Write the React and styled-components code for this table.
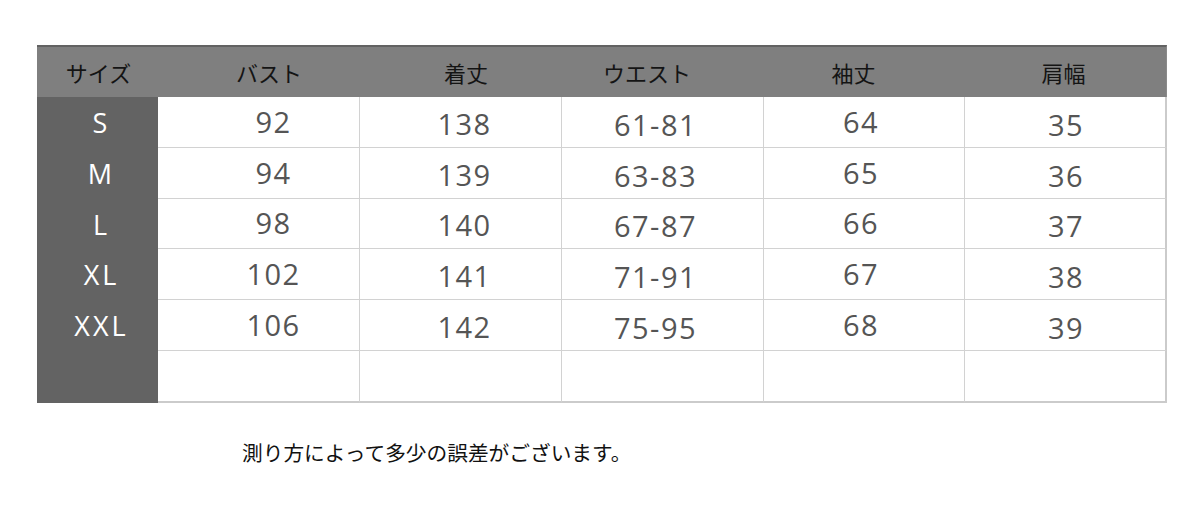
import styled, {createGlobalStyle} from "styled-components";

const GlobalStyle = createGlobalStyle`
  html, body {
    margin: 0;
    padding: 0;
    background: #ffffff;
  }
  body {
    font-family: "Open Sans", "Noto Sans CJK JP", sans-serif;
  }
`

const Page = styled.div`
  width: 1200px;
  height: 516px;
  padding: 45px 0 0 37px;
  box-sizing: border-box;
  overflow: hidden;
`

const Table = styled.div`
  display: grid;
  grid-template-columns: 121px 202px 202px 202px 201px 202px;
  grid-template-rows: 52px 51px 51px 50px 51px 51px 52px;
  width: 1130px;
`

const Cell = styled.div`
  box-sizing: border-box;
  display: flex;
  align-items: center;
  justify-content: center;
  padding-left: ${(p) => Math.max(0, p.$dx * 2)}px;
  padding-right: ${(p) => Math.max(0, -p.$dx * 2)}px;
  padding-top: ${(p) => Math.max(0, p.$dy * 2)}px;
  padding-bottom: ${(p) => Math.max(0, -p.$dy * 2)}px;
`

const HeadCell = styled(Cell)`
  background: #7f7f7f;
  border-top: 2px solid #626262;
  font-family: "Noto Sans CJK JP", sans-serif;
  font-size: 22px;
  color: #141414;
  ${(p) => p.$last && "border-right: 1px solid #8a8a8a;"}
`

const SizeCell = styled(Cell)`
  background: #636363;
  color: #ffffff;
  font-family: "Open Sans", sans-serif;
  font-size: 27px;
  font-weight: 500;
  letter-spacing: 3px;
`

const DataCell = styled(Cell)`
  background: #ffffff;
  border-right: ${(p) => (p.$last ? "2px solid #cbcbcb" : "1px solid #d2d2d2")};
  border-bottom: ${(p) => (p.$bottom ? "2px solid #cbcbcb" : "1px solid #d2d2d2")};
  color: #555555;
  font-family: "Open Sans", sans-serif;
  font-size: 29px;
  letter-spacing: 1.5px;
`

const Note = styled.p`
  margin: 39px 0 0 205px;
  font-family: "Noto Sans CJK JP", sans-serif;
  font-size: 20.7px;
  line-height: 20px;
  color: #111111;
`

const headers = [
    {label: "サイズ", dx: 1},
    {label: "バスト", dx: 10},
    {label: "着丈", dx: 5},
    {label: "ウエスト", dx: -16},
    {label: "袖丈", dx: -11},
    {label: "肩幅", dx: -2},
];

// text offsets inside each data column
const cols = [
    {dx: 15, dy: -1},
    {dx: 4, dy: 1},
    {dx: -7, dy: 2},
    {dx: -3, dy: -1},
    {dx: 1, dy: 2},
];

const rows = [
    {size: "S", values: ["92", "138", "61-81", "64", "35"]},
    {size: "M", values: ["94", "139", "63-83", "65", "36"]},
    {size: "L", values: ["98", "140", "67-87", "66", "37"]},
    {size: "XL", values: ["102", "141", "71-91", "67", "38"]},
    {size: "XXL", values: ["106", "142", "75-95", "68", "39"]},
    {size: "", values: ["", "", "", "", ""]},
];

const App = () => {
    return (
        <Page>
            <GlobalStyle/>
            <Table>
                {headers.map((h, i) => (
                    <HeadCell key={h.label} $dx={h.dx} $dy={0} $last={i === headers.length - 1}>
                        {h.label}
                    </HeadCell>
                ))}
                {rows.map((row, r) => (
                    <>
                        <SizeCell key={"s" + r} $dx={4} $dy={0}>{row.size}</SizeCell>
                        {row.values.map((v, c) => (
                            <DataCell
                                key={r + "-" + c}
                                $dx={cols[c].dx}
                                $dy={cols[c].dy}
                                $last={c === row.values.length - 1}
                                $bottom={r === rows.length - 1}
                            >
                                {v}
                            </DataCell>
                        ))}
                    </>
                ))}
            </Table>
            <Note>測り方によって多少の誤差がございます。</Note>
        </Page>
    )
}

export default App
